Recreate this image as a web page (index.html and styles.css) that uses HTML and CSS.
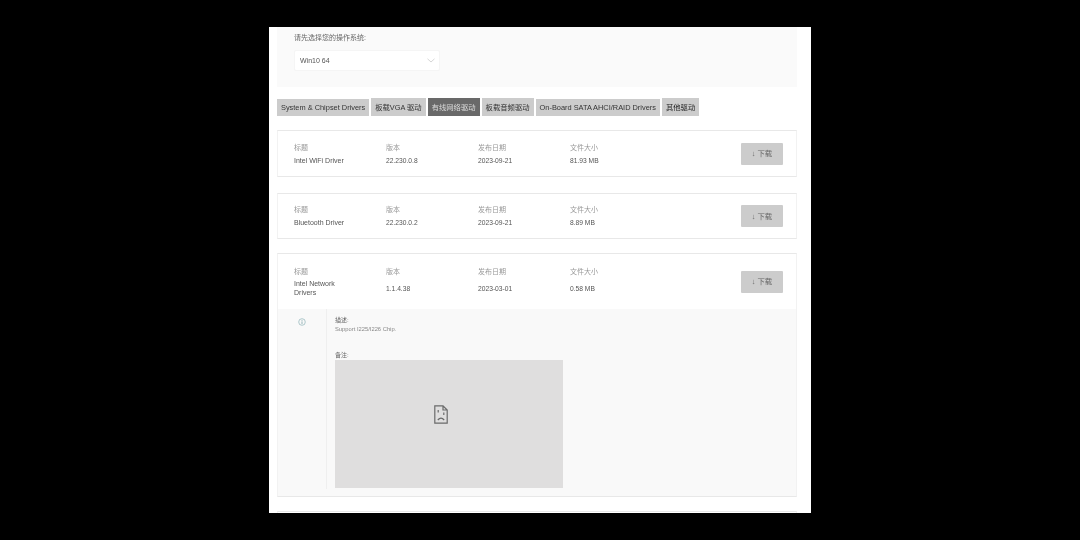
FILE: index.html
```html
<!DOCTYPE html>
<html lang="zh-CN">
<head>
    <meta charset="UTF-8">
    <title>驱动下载</title>
    <link rel="stylesheet" href="styles.css">
</head>
<body>
    <div class="page">
        <!-- 操作系统选择 -->
        <div class="os-box">
            <p class="os-label">请先选择您的操作系统:</p>
            <div class="os-select">
                <span>Win10 64</span>
                <svg class="chevron" width="8" height="5" viewBox="0 0 8 5"><path d="M0.5 0.8 L4 4 L7.5 0.8" fill="none" stroke="#c4c4c4" stroke-width="0.7"/></svg>
            </div>
        </div>

        <!-- 驱动分类 -->
        <div class="tabs">
            <span class="tab">System &amp; Chipset Drivers</span>
            <span class="tab tab-tall">板载VGA 驱动</span>
            <span class="tab tab-tall tab-active">有线网络驱动</span>
            <span class="tab tab-tall">板载音频驱动</span>
            <span class="tab">On-Board SATA AHCI/RAID Drivers</span>
            <span class="tab tab-tall tab-dark">其他驱动</span>
        </div>

        <div class="card card-first">
            <div class="row">
                <div class="col"><span class="label">标题</span><span class="value">Intel WiFi Driver</span></div>
                <div class="col"><span class="label">版本</span><span class="value value-num">22.230.0.8</span></div>
                <div class="col"><span class="label">发布日期</span><span class="value value-num">2023-09-21</span></div>
                <div class="col"><span class="label">文件大小</span><span class="value value-num">81.93 MB</span></div>
                <button class="download">↓ 下载</button>
            </div>
        </div>

        <div class="card">
            <div class="row row-short">
                <div class="col"><span class="label">标题</span><span class="value">Bluetooth Driver</span></div>
                <div class="col"><span class="label">版本</span><span class="value value-num">22.230.0.2</span></div>
                <div class="col"><span class="label">发布日期</span><span class="value value-num">2023-09-21</span></div>
                <div class="col"><span class="label">文件大小</span><span class="value value-num">8.89 MB</span></div>
                <button class="download">↓ 下载</button>
            </div>
        </div>

        <div class="card card-open">
            <div class="row row-tall">
                <div class="col"><span class="label">标题</span><span class="value value-wrap">Intel Network Drivers</span></div>
                <div class="col"><span class="label">版本</span><span class="value value-num value-mid">1.1.4.38</span></div>
                <div class="col"><span class="label">发布日期</span><span class="value value-num value-mid">2023-03-01</span></div>
                <div class="col"><span class="label">文件大小</span><span class="value value-num value-mid">0.58 MB</span></div>
                <button class="download">↓ 下载</button>
            </div>
            <div class="detail">
                <div class="detail-icon">
                    <svg width="8" height="8" viewBox="0 0 8 8"><circle cx="4" cy="4" r="3.3" fill="none" stroke="#8fb3b8" stroke-width="0.7"/><path d="M4 3.4 V6 M4 2 V2.8" stroke="#7fa5aa" stroke-width="0.8"/></svg>
                </div>
                <div class="detail-body">
                    <p class="detail-label">描述:</p>
                    <p class="detail-text">Support I225/I226 Chip.</p>
                    <p class="detail-label detail-note">备注:</p>
                    <div class="broken-img">
                        <svg width="14" height="19" viewBox="0 0 14 19">
                            <path d="M0.8 0.8 H9 L13.2 5 V18.2 H0.8 Z M9 0.8 V5 H13.2" fill="none" stroke="#6a6a6a" stroke-width="1.2"/>
                            <path d="M4.2 5 V7.4 M9.8 7.6 V10" stroke="#6a6a6a" stroke-width="1.2"/>
                            <path d="M3.8 15 Q7 11.4 10.2 15" fill="none" stroke="#6a6a6a" stroke-width="1.2"/>
                        </svg>
                    </div>
                </div>
            </div>
        </div>

        <div class="card card-next"></div>
    </div>
</body>
</html>
```

FILE: styles.css
```css
/* Страница на чёрном фоне */
html, body {
    margin: 0;
    height: 540px;
    background-color: #000;
    overflow: hidden;
}

body {
    font-family: "Liberation Sans", "Noto Sans CJK SC", sans-serif;
    font-size: 7px;
    color: #555;
}

p {
    margin: 0;
}

.page {
    box-sizing: border-box;
    width: 542px;
    height: 486px;
    margin: 27px 0 0 269px;
    padding: 0 14px 0 8px;
    background-color: #fff;
    overflow: hidden;
    filter: blur(0.25px);
}

.os-box {
    box-sizing: border-box;
    height: 60px;
    padding: 6px 17px 0;
    background-color: #fafafa;
}

.os-label {
    height: 10px;
    line-height: 10px;
    color: #666;
}

.os-select {
    display: flex;
    align-items: center;
    justify-content: space-between;
    box-sizing: border-box;
    width: 146px;
    height: 21px;
    margin-top: 7px;
    padding: 0 4px 0 5px;
    background-color: #fff;
    border: 1px solid #f5f5f5;
    border-radius: 2px;
    color: #555;
}

.tabs {
    display: flex;
    align-items: center;
    gap: 2px;
    height: 20px;
    margin-top: 10px;
    font-size: 7.4px;
}

.tab {
    display: flex;
    align-items: center;
    height: 17px;
    padding: 0 4px;
    background-color: #ccc;
    color: #333;
    white-space: nowrap;
}

.tab-tall {
    box-sizing: border-box;
    height: 18px;
    padding-bottom: 1px;
    font-size: 7.34px;
}

.tab-active {
    background-color: #696969;
    color: #ddd;
}

.tab-dark {
    color: #222;
}

.card {
    box-sizing: border-box;
    margin-top: 16px;
    background-color: #fff;
    border: 1px solid #f2f2f2;
    border-top-color: #e8e8e8;
    border-bottom-color: #e8e8e8;
}

.card-first {
    margin-top: 13px;
    height: 47px;
}

.card-open {
    height: 244px;
    margin-top: 14px;
}

.card-next {
    height: 10px;
    margin-top: 14px;
}

.row {
    display: flex;
    align-items: center;
    height: 45px;
    padding: 0 13px 0 16px;
}

.row-short {
    height: 44px;
}

.row-tall {
    height: 55px;
}

.col {
    display: flex;
    flex-direction: column;
    width: 92px;
    height: 22px;
}

.row-tall .col {
    height: 32px;
}

.row-tall .label {
    line-height: 12px;
}

.label {
    height: 10px;
    line-height: 10px;
    color: #999;
}

.value {
    height: 10px;
    line-height: 10px;
    margin-top: 3px;
    color: #555;
}

.value-num {
    font-size: 6.7px;
}

.value-wrap {
    width: 50px;
    height: 18px;
    line-height: 9px;
}

.value-mid {
    margin-top: 8px;
}

.download {
    width: 42px;
    height: 22px;
    margin-left: auto;
    padding: 0 0 2px;
    background-color: #ccc;
    border: none;
    border-radius: 1px;
    font: inherit;
    font-size: 7.4px;
    color: #666;
}

.detail {
    display: flex;
    height: 187px;
    background-color: #f9f9f9;
}

.detail-icon {
    box-sizing: border-box;
    width: 49px;
    margin-bottom: 7px;
    padding: 9px 0 0 20px;
    border-right: 1px solid #efefef;
    line-height: 0;
}

.detail-body {
    padding: 7px 0 0 8px;
}

.detail-label {
    height: 9px;
    line-height: 9px;
    font-size: 6px;
    color: #666;
}

.detail-text {
    height: 8px;
    line-height: 8px;
    font-size: 5.8px;
    color: #888;
}

.detail-note {
    margin-top: 18px;
}

/* Значок битой картинки стоит выше и левее центра */
.broken-img {
    box-sizing: border-box;
    display: flex;
    align-items: center;
    justify-content: center;
    width: 228px;
    height: 128px;
    padding: 0 16px 20px 0;
    background-color: #dfdede;
}
```
